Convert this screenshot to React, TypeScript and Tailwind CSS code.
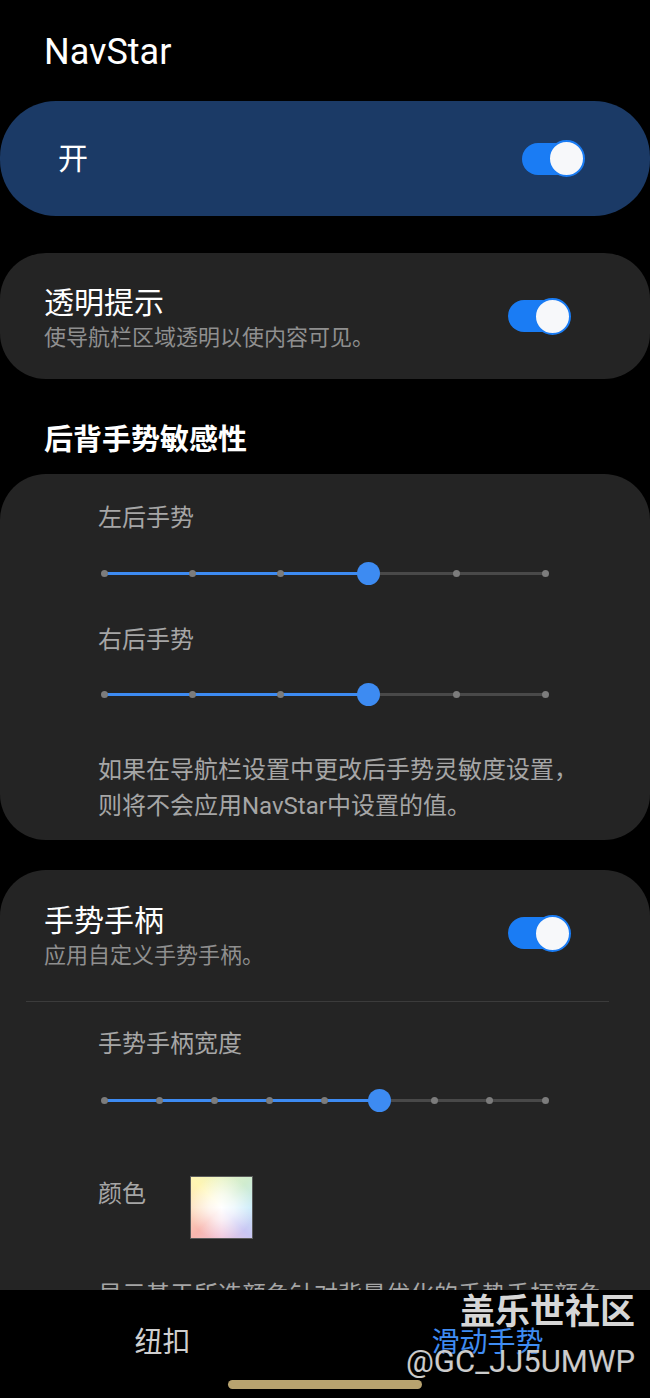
import React from 'react'

const FONT = "font-['Roboto','Noto_Sans_CJK_SC',sans-serif]"

function Toggle({ className = '' }: { className?: string }) {
  return (
    <div className={`flex items-center ${className}`}>
      <div className="h-[32px] w-[50px] rounded-full bg-[#1a7cf4]" />
      <div className="-ml-[24px] h-[37px] w-[37px] rounded-full border-2 border-[#1a7cf4] bg-[#f7f8fa]" />
    </div>
  )
}

function Slider({ steps, value }: { steps: number; value: number }) {
  const pct = (i: number) => (i / (steps - 1)) * 100
  return (
    <div className="relative ml-[6px] h-[24px] w-[441px]">
      <div className="absolute left-0 right-0 top-[10.5px] h-[3px] rounded-full bg-[#494949]" />
      <div
        className="absolute left-0 top-[10.5px] h-[3px] rounded-full bg-[#3d8bf2]"
        style={{ width: `${pct(value)}%` }}
      />
      {Array.from({ length: steps }).map((_, i) => (
        <div
          key={i}
          className="absolute top-[8.5px] -ml-[3.5px] h-[7px] w-[7px] rounded-full bg-[#7c7c7c]"
          style={{ left: `${pct(i)}%` }}
        />
      ))}
      <div
        className="absolute top-[0.5px] -ml-[11.5px] h-[23px] w-[23px] rounded-full bg-[#3d8bf2]"
        style={{ left: `${pct(value)}%` }}
      />
    </div>
  )
}

export default function App() {
  return (
    <div className={`flex h-[1398px] w-[650px] flex-col overflow-hidden bg-black ${FONT}`}>
      <div className="flex min-h-0 flex-1 flex-col overflow-hidden">
        {/* header */}
        <div className="h-[101px] shrink-0 pl-[44px] pt-[32px]">
          <h1 className="text-[36px] leading-[40px] text-white">NavStar</h1>
        </div>

        {/* master switch */}
        <div className="flex h-[115px] shrink-0 items-center justify-between rounded-[56px] bg-[#1b3a66] pl-[58px] pr-[65px]">
          <span className="text-[30px] leading-[36px] text-white">开</span>
          <Toggle />
        </div>

        {/* transparent hint */}
        <div className="mt-[37px] flex h-[126px] shrink-0 items-center justify-between rounded-[46px] bg-[#242424] pl-[44px] pr-[79px]">
          <div className="flex flex-col pt-[3px]">
            <span className="text-[30px] leading-[38px] text-white">透明提示</span>
            <span className="mt-[2px] text-[22px] leading-[28px] text-[#8f8f8f]">
              使导航栏区域透明以使内容可见。
            </span>
          </div>
          <Toggle />
        </div>

        {/* section header */}
        <div className="shrink-0 pb-[16px] pl-[44px] pt-[43px]">
          <h2 className="text-[29px] font-bold leading-[36px] text-white">后背手势敏感性</h2>
        </div>

        {/* back gesture sensitivity */}
        <div className="flex shrink-0 flex-col rounded-[46px] bg-[#242424] pb-[16px] pl-[98px] pt-[29px]">
          <span className="text-[24px] leading-[30px] text-[#a6a6a6]">左后手势</span>
          <div className="mt-[28px]">
            <Slider steps={6} value={3} />
          </div>
          <span className="mt-[40px] text-[24px] leading-[30px] text-[#a6a6a6]">右后手势</span>
          <div className="mt-[27px]">
            <Slider steps={6} value={3} />
          </div>
          <p className="mt-[46px] text-[24px] leading-[36px] text-[#a6a6a6]">
            如果在导航栏设置中更改后手势灵敏度设置，
            <br />
            则将不会应用NavStar中设置的值。
          </p>
        </div>

        {/* gesture handle */}
        <div className="mt-[30px] flex shrink-0 flex-col rounded-t-[46px] bg-[#242424]">
          <div className="flex items-center justify-between pl-[44px] pr-[79px] pt-[32px]">
            <div className="flex flex-col">
              <span className="text-[30px] leading-[38px] text-white">手势手柄</span>
              <span className="mt-[2px] text-[22px] leading-[28px] text-[#8f8f8f]">
                应用自定义手势手柄。
              </span>
            </div>
            <Toggle className="-mt-[6px]" />
          </div>
          <div className="ml-[26px] mr-[41px] mt-[31px] h-px bg-[#3b3b3b]" />
          <div className="flex flex-col pl-[98px]">
            <span className="mt-[27px] text-[24px] leading-[30px] text-[#a6a6a6]">手势手柄宽度</span>
            <div className="mt-[29px]">
              <Slider steps={9} value={5} />
            </div>
            <div className="mt-[64px] flex items-start">
              <span className="mt-[3px] text-[24px] leading-[30px] text-[#a6a6a6]">颜色</span>
              <div className="ml-[44px] h-[63px] w-[63px] border border-[#5a5a5a] bg-[radial-gradient(circle,#ffffff_0%,rgba(255,255,255,0.7)_30%,rgba(255,255,255,0)_75%),conic-gradient(from_0deg,#eaf4c6,#cfeccf,#caecfa,#c9c6f3,#f0c6dc,#f8b6ae,#fde2c2,#fff5b2,#eaf4c6)]" />
            </div>
            <p className="mt-[38px] whitespace-nowrap text-[24px] leading-[36px] text-[#a6a6a6]">
              显示基于所选颜色针对背景优化的手势手柄颜色
            </p>
          </div>
        </div>
      </div>

      {/* bottom tabs */}
      <div className="relative flex h-[108px] shrink-0 flex-col bg-black pt-[33px]">
        <div className="flex h-[40px] items-center">
          <div className="flex flex-1 justify-center text-[28px] leading-[36px] text-[#cfcfcf]">纽扣</div>
          <div className="flex flex-1 justify-center text-[28px] leading-[36px] text-[#3f8cf3]">滑动手势</div>
        </div>
        <div className="mx-auto mt-[17px] h-[9px] w-[194px] rounded-full bg-[#b8a36f]" />

        {/* watermark */}
        <div className="absolute right-[15px] top-[3px] flex flex-col items-end">
          <span className="text-[35px] font-bold leading-[40px] text-[#d6d6d6] [text-shadow:0_0_2px_#000]">
            盖乐世社区
          </span>
          <span className="mt-[11px] text-[31px] leading-[36px] text-white/80 [text-shadow:0_0_2px_#000]">
            @GC_JJ5UMWP
          </span>
        </div>
      </div>
    </div>
  )
}
